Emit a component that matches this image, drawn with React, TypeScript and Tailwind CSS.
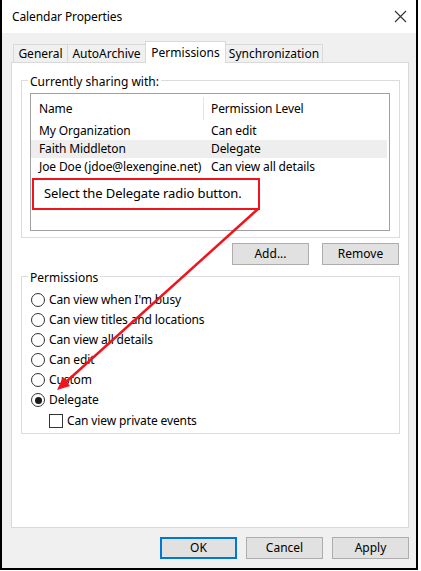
import React from "react";

const font = { fontFamily: "'Noto Sans', 'Open Sans', sans-serif" };

function Tab({ label, width, active }: { label: string; width: string; active?: boolean }) {
    if (active) {
        return (
            <div className={`relative z-10 -mb-px -ml-px h-[22px] ${width} bg-white border border-b-0 border-[#d9d9d9] flex items-center justify-center text-[12px] text-black`}>
                {label}
            </div>
        );
    }
    return (
        <div className={`h-[18px] ${width} -ml-px first:ml-0 bg-[#f0f0f0] border border-b-0 border-[#d9d9d9] flex items-center justify-center text-[12px] text-black`}>
            {label}
        </div>
    );
}

function Radio({ label, checked }: { label: string; checked?: boolean }) {
    return (
        <div className="h-[20px] flex items-center pl-[9px] gap-[4px]">
            <div className="w-[14px] h-[14px] rounded-full border border-[#333] bg-white flex items-center justify-center">
                {checked && <div className="w-[7px] h-[7px] rounded-full bg-[#1a1a1a]" />}
            </div>
            <span className="text-[12px] text-black leading-none tracking-[-0.12px] whitespace-nowrap">{label}</span>
        </div>
    );
}

function WinButton({ label, primary }: { label: string; primary?: boolean }) {
    return (
        <button
            className={`w-[77px] h-[22px] bg-[#e1e1e1] text-[12px] text-black flex items-center justify-center ${primary ? "border-2 border-[#0078d7]" : "border border-[#adadad]"}`}
        >
            {label}
        </button>
    );
}

function Legend({ label }: { label: string }) {
    return (
        <legend className="ml-[6px] px-[2px] h-[16px] leading-[16px] text-[12px] text-black">
            <span className="relative top-[2px]">{label}</span>
        </legend>
    );
}

const rows = [
    { name: "My Organization", level: "Can edit" },
    { name: "Faith Middleton", level: "Delegate", selected: true },
    { name: "Joe Doe (jdoe@lexengine.net)", level: "Can view all details" },
];

export default function App() {
    return (
        <div className="relative w-[421px] h-[571px] bg-white" style={font}>
            <div className="w-[418px] h-[570px] border-x-2 border-b-2 border-black flex flex-col bg-[#f0f0f0]">
                {/* Title bar */}
                <div className="h-[33px] bg-white flex items-center justify-between pl-[10px] pr-[9px]">
                    <span className="text-[12px] text-black tracking-[-0.1px]">Calendar Properties</span>
                    <svg width="13" height="13" viewBox="0 0 13 13" className="text-[#333]">
                        <path d="M1 1 L12 12 M12 1 L1 12" stroke="currentColor" strokeWidth="1.1" fill="none" />
                    </svg>
                </div>

                {/* Tabs */}
                <div className="pt-[8px] pl-[11px] flex items-end h-[29px]">
                    <Tab label="General" width="w-[55px]" />
                    <Tab label="AutoArchive" width="w-[79px]" />
                    <Tab label="Permissions" width="w-[81px]" active />
                    <Tab label="Synchronization" width="w-[98px]" />
                </div>

                {/* Tab panel */}
                <div className="ml-[9px] w-[398px] h-[466px] bg-white border border-[#d9d9d9]">
                    <fieldset className="mt-[9px] ml-[9px] w-[379px] border border-[#dcdcdc] pb-[6px]">
                        <Legend label="Currently sharing with:" />
                        <div className="relative mt-[5px] ml-[8px] w-[360px] h-[138px] border border-[#a0a0a0] bg-white">
                            <div className="flex h-[26px] pt-[3px] text-[12px] text-black tracking-[-0.12px]">
                                <div className="w-[173px] pl-[8px] flex items-center border-r border-[#e5e5e5]">Name</div>
                                <div className="pl-[7px] flex items-center">Permission Level</div>
                            </div>
                            <div className="h-[2px]" />
                            {rows.map((r) => (
                                <div key={r.name} className={`flex h-[18px] items-center text-[12px] text-black tracking-[-0.12px] whitespace-nowrap mr-[2px] ${r.selected ? "bg-[#eeeeee]" : ""}`}>
                                    <div className="w-[173px] pl-[8px]">{r.name}</div>
                                    <div className="pl-[7px]">{r.level}</div>
                                </div>
                            ))}
                            <div className="absolute left-[1px] top-[84px] w-[228px] h-[32px] border-2 border-[#f0141c] bg-white flex items-center pl-[10px]">
                                <span className="text-[13px] text-black tracking-[-0.1px] whitespace-nowrap">Select the Delegate radio button.</span>
                            </div>
                        </div>
                    </fieldset>

                    <div className="mt-[5px] flex justify-end gap-[13px] pr-[9px]">
                        <WinButton label="Add..." />
                        <WinButton label="Remove" />
                    </div>

                    <fieldset className="mt-[3px] ml-[9px] w-[379px] border border-[#dcdcdc] pb-[2px]">
                        <Legend label="Permissions" />
                        <div className="mt-[6px] flex flex-col">
                            <Radio label="Can view when I'm busy" />
                            <Radio label="Can view titles and locations" />
                            <Radio label="Can view all details" />
                            <Radio label="Can edit" />
                            <Radio label="Custom" />
                            <Radio label="Delegate" checked />
                            <div className="mt-[1px] h-[20px] flex items-center pl-[27px] gap-[4px]">
                                <div className="w-[14px] h-[14px] border border-[#333] bg-white" />
                                <span className="text-[12px] text-black leading-none tracking-[-0.12px]">Can view private events</span>
                            </div>
                        </div>
                    </fieldset>
                </div>

                {/* Dialog buttons */}
                <div className="mt-[9px] flex justify-end gap-[9px] pr-[7px]">
                    <WinButton label="OK" primary />
                    <WinButton label="Cancel" />
                    <WinButton label="Apply" />
                </div>
            </div>

            {/* Annotation arrow */}
            <svg className="absolute inset-0 pointer-events-none" width="421" height="571" viewBox="0 0 421 571">
                <line x1="258" y1="209" x2="66" y2="382" stroke="#f0141c" strokeWidth="2.5" />
                <polygon points="57,390 70,386 63,377" fill="#f0141c" />
            </svg>
        </div>
    );
}
